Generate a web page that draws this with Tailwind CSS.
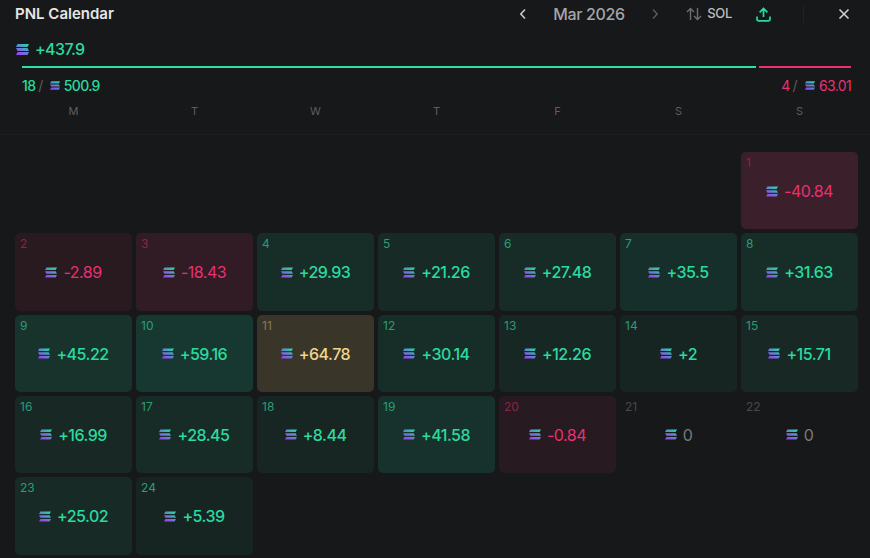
<!DOCTYPE html>
<html lang="en">
<head>
  <meta charset="UTF-8" />
  <title>PNL Calendar</title>
  <script src="https://cdn.jsdelivr.net/npm/@tailwindcss/browser@4"></script>
</head>
<body class="w-[870px] h-[558px] overflow-hidden bg-[#17181a] font-['Inter',sans-serif]">

  <!-- shared solana mark -->
  <svg class="absolute w-0 h-0">
    <defs>
      <linearGradient id="solGrad" x1="1" y1="0" x2="0.2" y2="1">
        <stop offset="0" stop-color="#1fe3a2" />
        <stop offset="0.5" stop-color="#5a8ccb" />
        <stop offset="1" stop-color="#9b3ff5" />
      </linearGradient>
      <symbol id="sol" viewBox="0 0 12 10">
        <path fill="url(#solGrad)" d="M1.4 0H12L10.6 2.6H0ZM0 3.7H10.6L12 6.3H1.4ZM1.4 7.4H12L10.6 10H0Z" />
      </symbol>
    </defs>
  </svg>

  <!-- Header -->
  <div class="h-[28px] pl-[15px] flex items-center">
    <span class="text-[15px] font-semibold text-[#e6e6e6]">PNL Calendar</span>
    <div class="ml-auto flex items-center">
      <svg class="w-[12px] h-[12px] mr-[24px] text-[#c8c8c8]" viewBox="0 0 12 12" fill="none" stroke="currentColor" stroke-width="1.6"><path d="M8 1.5 3.8 6 8 10.5" /></svg>
      <span class="text-[16px] font-medium tracking-[-0.35px] text-[#a6a6a6] w-[71px] whitespace-nowrap">Mar 2026</span>
      <svg class="w-[12px] h-[12px] ml-[25px] text-[#5c5c5c]" viewBox="0 0 12 12" fill="none" stroke="currentColor" stroke-width="1.4"><path d="M4 1.5 8.2 6 4 10.5" /></svg>
      <svg class="w-[16px] h-[14px] ml-[25px] text-[#6e6e6e]" viewBox="0 0 16 14" fill="none" stroke="currentColor" stroke-width="1.4"><path d="M4.5 13V1.5M1 5 4.5 1.5 8 5M11.5 1V12.5M8 9 11.5 12.5 15 9" /></svg>
      <span class="ml-[5px] text-[13px] font-medium tracking-[-0.3px] text-[#bdbdbd]">SOL</span>
      <svg class="w-[15px] h-[15px] ml-[24px] text-[#2adb9f]" viewBox="0 0 15 15" fill="none" stroke="currentColor" stroke-width="1.7"><path d="M7.5 10V1.5M3.6 5.3 7.5 1.5 11.4 5.3M1 9.5V12a1.8 1.8 0 0 0 1.8 1.8H12.2A1.8 1.8 0 0 0 14 12V9.5" /></svg>
      <div class="w-px h-[18px] ml-[32px] bg-[#212226]"></div>
      <svg class="w-[12px] h-[12px] ml-[34px] mr-[20px] text-[#d0d0d0]" viewBox="0 0 12 12" fill="none" stroke="currentColor" stroke-width="1.6"><path d="M1.5 1.5 10.5 10.5M10.5 1.5 1.5 10.5" /></svg>
    </div>
  </div>

  <!-- Total -->
  <div class="mt-[12px] pl-[16px] h-[18px] flex items-center gap-[6px]">
    <svg class="w-[13px] h-[11px]"><use href="#sol" /></svg>
    <span class="text-[16px] font-medium tracking-[-0.6px] text-[#2adb9f]">+437.9</span>
  </div>

  <!-- Win / loss bar -->
  <div class="mt-[8px] ml-[22px] w-[829px] flex gap-[3px]">
    <div class="w-[734px] h-[2px] bg-[#2fdfa6]"></div>
    <div class="w-[92px] h-[2px] bg-[#ef2f6d]"></div>
  </div>
  <div class="mt-[8px] ml-[22px] mr-[19px] h-[18px] flex items-center justify-between text-[14px] tracking-[-0.65px]">
    <div class="flex items-center text-[#2adb9f]">
      <span class="font-medium">18</span><span class="ml-[3px] text-[#5c5c5c]">/</span>
      <svg class="w-[10px] h-[9px] ml-[7px] mr-[4px]"><use href="#sol" /></svg>
      <span class="font-medium">500.9</span>
    </div>
    <div class="flex items-center text-[#ea3070]">
      <span>4</span><span class="ml-[3px] text-[#5c5c5c]">/</span>
      <svg class="w-[10px] h-[9px] ml-[8px] mr-[4px]"><use href="#sol" /></svg>
      <span>63.01</span>
    </div>
  </div>

  <!-- Weekdays -->
  <div class="mt-[9px] px-[15px] h-[32px] grid grid-cols-[repeat(7,117px)] gap-[4px] border-b border-[#1c1d20] text-[11px] text-[#5f5f5f] text-center">
    <span>M</span>
    <span>T</span>
    <span>W</span>
    <span>T</span>
    <span>F</span>
    <span>S</span>
    <span>S</span>
  </div>

  <!-- Days -->
  <div class="mt-[17px] ml-[15px] w-[843px] grid grid-cols-[repeat(7,117px)] auto-rows-[77.33px] gap-[4px]">
    <div class="col-start-7 rounded-[5px] bg-[#3b1f2a] flex flex-col">
      <span class="pl-[5px] pt-[2px] h-[17px] text-[12px] text-[#8a2548]">1</span>
      <div class="flex items-center justify-center gap-[6px] mt-[10px] text-[16px] tracking-[-0.5px] text-[#ea3070]"><svg class="w-[12px] h-[11px]"><use href="#sol" /></svg>-40.84</div>
    </div>

    <div class="rounded-[5px] bg-[#291a20] flex flex-col">
      <span class="pl-[5px] pt-[2px] h-[17px] text-[12px] text-[#8a2548]">2</span>
      <div class="flex items-center justify-center gap-[6px] mt-[10px] text-[16px] tracking-[-0.5px] text-[#ea3070]"><svg class="w-[12px] h-[11px]"><use href="#sol" /></svg>-2.89</div>
    </div>
    <div class="rounded-[5px] bg-[#311c25] flex flex-col">
      <span class="pl-[5px] pt-[2px] h-[17px] text-[12px] text-[#8a2548]">3</span>
      <div class="flex items-center justify-center gap-[6px] mt-[10px] text-[16px] tracking-[-0.5px] text-[#ea3070]"><svg class="w-[12px] h-[11px]"><use href="#sol" /></svg>-18.43</div>
    </div>
    <div class="rounded-[5px] bg-[#172d28] flex flex-col">
      <span class="pl-[5px] pt-[2px] h-[17px] text-[12px] text-[#2a9c78]">4</span>
      <div class="flex items-center justify-center gap-[6px] mt-[10px] text-[16px] font-medium tracking-[-0.5px] text-[#2adb9f]"><svg class="w-[12px] h-[11px]"><use href="#sol" /></svg>+29.93</div>
    </div>
    <div class="rounded-[5px] bg-[#172a26] flex flex-col">
      <span class="pl-[5px] pt-[2px] h-[17px] text-[12px] text-[#2a9c78]">5</span>
      <div class="flex items-center justify-center gap-[6px] mt-[10px] text-[16px] font-medium tracking-[-0.5px] text-[#2adb9f]"><svg class="w-[12px] h-[11px]"><use href="#sol" /></svg>+21.26</div>
    </div>
    <div class="rounded-[5px] bg-[#172c27] flex flex-col">
      <span class="pl-[5px] pt-[2px] h-[17px] text-[12px] text-[#2a9c78]">6</span>
      <div class="flex items-center justify-center gap-[6px] mt-[10px] text-[16px] font-medium tracking-[-0.5px] text-[#2adb9f]"><svg class="w-[12px] h-[11px]"><use href="#sol" /></svg>+27.48</div>
    </div>
    <div class="rounded-[5px] bg-[#172f2a] flex flex-col">
      <span class="pl-[5px] pt-[2px] h-[17px] text-[12px] text-[#2a9c78]">7</span>
      <div class="flex items-center justify-center gap-[6px] mt-[10px] text-[16px] font-medium tracking-[-0.5px] text-[#2adb9f]"><svg class="w-[12px] h-[11px]"><use href="#sol" /></svg>+35.5</div>
    </div>
    <div class="rounded-[5px] bg-[#172d28] flex flex-col">
      <span class="pl-[5px] pt-[2px] h-[17px] text-[12px] text-[#2a9c78]">8</span>
      <div class="flex items-center justify-center gap-[6px] mt-[10px] text-[16px] font-medium tracking-[-0.5px] text-[#2adb9f]"><svg class="w-[12px] h-[11px]"><use href="#sol" /></svg>+31.63</div>
    </div>

    <div class="rounded-[5px] bg-[#17332c] flex flex-col">
      <span class="pl-[5px] pt-[2px] h-[17px] text-[12px] text-[#2a9c78]">9</span>
      <div class="flex items-center justify-center gap-[6px] mt-[10px] text-[16px] font-medium tracking-[-0.5px] text-[#2adb9f]"><svg class="w-[12px] h-[11px]"><use href="#sol" /></svg>+45.22</div>
    </div>
    <div class="rounded-[5px] bg-[#173830] flex flex-col">
      <span class="pl-[5px] pt-[2px] h-[17px] text-[12px] text-[#2a9c78]">10</span>
      <div class="flex items-center justify-center gap-[6px] mt-[10px] text-[16px] font-medium tracking-[-0.5px] text-[#2adb9f]"><svg class="w-[12px] h-[11px]"><use href="#sol" /></svg>+59.16</div>
    </div>
    <div class="rounded-[5px] bg-[#3a3529] flex flex-col">
      <span class="pl-[5px] pt-[2px] h-[17px] text-[12px] text-[#85795a]">11</span>
      <div class="flex items-center justify-center gap-[6px] mt-[10px] text-[16px] font-medium tracking-[-0.5px] text-[#f0d78c]"><svg class="w-[12px] h-[11px]"><use href="#sol" /></svg>+64.78</div>
    </div>
    <div class="rounded-[5px] bg-[#172d28] flex flex-col">
      <span class="pl-[5px] pt-[2px] h-[17px] text-[12px] text-[#2a9c78]">12</span>
      <div class="flex items-center justify-center gap-[6px] mt-[10px] text-[16px] font-medium tracking-[-0.5px] text-[#2adb9f]"><svg class="w-[12px] h-[11px]"><use href="#sol" /></svg>+30.14</div>
    </div>
    <div class="rounded-[5px] bg-[#172724] flex flex-col">
      <span class="pl-[5px] pt-[2px] h-[17px] text-[12px] text-[#2a9c78]">13</span>
      <div class="flex items-center justify-center gap-[6px] mt-[10px] text-[16px] font-medium tracking-[-0.5px] text-[#2adb9f]"><svg class="w-[12px] h-[11px]"><use href="#sol" /></svg>+12.26</div>
    </div>
    <div class="rounded-[5px] bg-[#172522] flex flex-col">
      <span class="pl-[5px] pt-[2px] h-[17px] text-[12px] text-[#2a9c78]">14</span>
      <div class="flex items-center justify-center gap-[6px] mt-[10px] text-[16px] font-medium tracking-[-0.5px] text-[#2adb9f]"><svg class="w-[12px] h-[11px]"><use href="#sol" /></svg>+2</div>
    </div>
    <div class="rounded-[5px] bg-[#172825] flex flex-col">
      <span class="pl-[5px] pt-[2px] h-[17px] text-[12px] text-[#2a9c78]">15</span>
      <div class="flex items-center justify-center gap-[6px] mt-[10px] text-[16px] font-medium tracking-[-0.5px] text-[#2adb9f]"><svg class="w-[12px] h-[11px]"><use href="#sol" /></svg>+15.71</div>
    </div>

    <div class="rounded-[5px] bg-[#172825] flex flex-col">
      <span class="pl-[5px] pt-[2px] h-[17px] text-[12px] text-[#2a9c78]">16</span>
      <div class="flex items-center justify-center gap-[6px] mt-[10px] text-[16px] font-medium tracking-[-0.5px] text-[#2adb9f]"><svg class="w-[12px] h-[11px]"><use href="#sol" /></svg>+16.99</div>
    </div>
    <div class="rounded-[5px] bg-[#172b27] flex flex-col">
      <span class="pl-[5px] pt-[2px] h-[17px] text-[12px] text-[#2a9c78]">17</span>
      <div class="flex items-center justify-center gap-[6px] mt-[10px] text-[16px] font-medium tracking-[-0.5px] text-[#2adb9f]"><svg class="w-[12px] h-[11px]"><use href="#sol" /></svg>+28.45</div>
    </div>
    <div class="rounded-[5px] bg-[#172622] flex flex-col">
      <span class="pl-[5px] pt-[2px] h-[17px] text-[12px] text-[#2a9c78]">18</span>
      <div class="flex items-center justify-center gap-[6px] mt-[10px] text-[16px] font-medium tracking-[-0.5px] text-[#2adb9f]"><svg class="w-[12px] h-[11px]"><use href="#sol" /></svg>+8.44</div>
    </div>
    <div class="rounded-[5px] bg-[#17322c] flex flex-col">
      <span class="pl-[5px] pt-[2px] h-[17px] text-[12px] text-[#2a9c78]">19</span>
      <div class="flex items-center justify-center gap-[6px] mt-[10px] text-[16px] font-medium tracking-[-0.5px] text-[#2adb9f]"><svg class="w-[12px] h-[11px]"><use href="#sol" /></svg>+41.58</div>
    </div>
    <div class="rounded-[5px] bg-[#271a20] flex flex-col">
      <span class="pl-[5px] pt-[2px] h-[17px] text-[12px] text-[#8a2548]">20</span>
      <div class="flex items-center justify-center gap-[6px] mt-[10px] text-[16px] tracking-[-0.5px] text-[#ea3070]"><svg class="w-[12px] h-[11px]"><use href="#sol" /></svg>-0.84</div>
    </div>
    <div class="flex flex-col">
      <span class="pl-[5px] pt-[2px] h-[17px] text-[12px] text-[#4a4a4a]">21</span>
      <div class="flex items-center justify-center gap-[6px] mt-[10px] text-[16px] tracking-[-0.5px] text-[#7a7a7a]"><svg class="w-[12px] h-[11px]"><use href="#sol" /></svg>0</div>
    </div>
    <div class="flex flex-col">
      <span class="pl-[5px] pt-[2px] h-[17px] text-[12px] text-[#4a4a4a]">22</span>
      <div class="flex items-center justify-center gap-[6px] mt-[10px] text-[16px] tracking-[-0.5px] text-[#7a7a7a]"><svg class="w-[12px] h-[11px]"><use href="#sol" /></svg>0</div>
    </div>

    <div class="rounded-[5px] bg-[#172a26] flex flex-col">
      <span class="pl-[5px] pt-[2px] h-[17px] text-[12px] text-[#2a9c78]">23</span>
      <div class="flex items-center justify-center gap-[6px] mt-[10px] text-[16px] font-medium tracking-[-0.5px] text-[#2adb9f]"><svg class="w-[12px] h-[11px]"><use href="#sol" /></svg>+25.02</div>
    </div>
    <div class="rounded-[5px] bg-[#172522] flex flex-col">
      <span class="pl-[5px] pt-[2px] h-[17px] text-[12px] text-[#2a9c78]">24</span>
      <div class="flex items-center justify-center gap-[6px] mt-[10px] text-[16px] font-medium tracking-[-0.5px] text-[#2adb9f]"><svg class="w-[12px] h-[11px]"><use href="#sol" /></svg>+5.39</div>
    </div>
  </div>

</body>
</html>
